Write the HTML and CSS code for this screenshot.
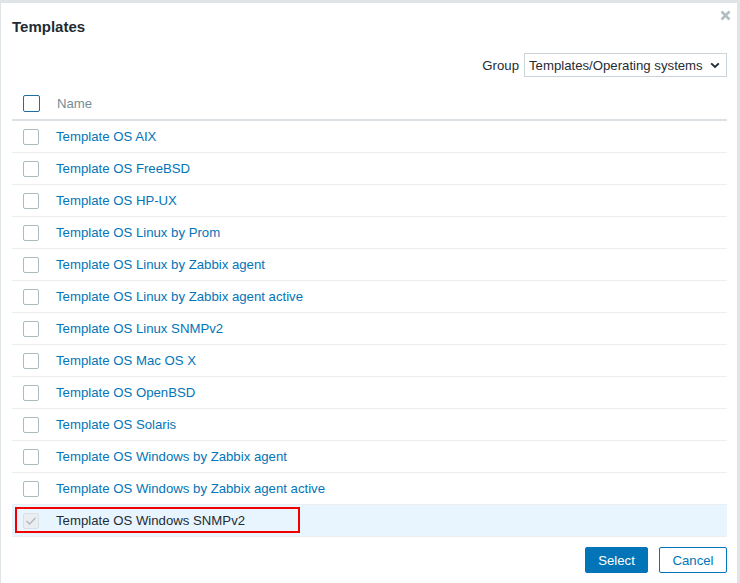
FILE: index.html
```html
<!DOCTYPE html>
<html>
<head>
<meta charset="utf-8">
<link rel="stylesheet" href="styles.css">
</head>
<body>
<div class="dialog">
  <div class="dialog-head">
    <h1 class="title">Templates</h1>
    <span class="close">
      <svg width="11" height="11" viewBox="0 0 11 11"><path d="M1.5 1.5 L9.5 9.5 M9.5 1.5 L1.5 9.5" stroke="#b3bec4" stroke-width="2.6" stroke-linecap="butt"/></svg>
    </span>
  </div>
  <div class="filter">
    <span class="filter-label">Group</span>
    <div class="select">
      <span>Templates/Operating systems</span>
      <svg class="chev" width="10" height="7" viewBox="0 0 10 7"><path d="M1.2 1.4 L5 5 L8.8 1.4" fill="none" stroke="#1f2c33" stroke-width="1.9"/></svg>
    </div>
  </div>
  <div class="table">
    <div class="row head">
      <span class="cb cb-focus"></span>
      <span class="name-h">Name</span>
    </div>
    <div class="row"><span class="cb"></span><a class="link">Template OS AIX</a></div>
    <div class="row"><span class="cb"></span><a class="link">Template OS FreeBSD</a></div>
    <div class="row"><span class="cb"></span><a class="link">Template OS HP-UX</a></div>
    <div class="row"><span class="cb"></span><a class="link">Template OS Linux by Prom</a></div>
    <div class="row"><span class="cb"></span><a class="link">Template OS Linux by Zabbix agent</a></div>
    <div class="row"><span class="cb"></span><a class="link">Template OS Linux by Zabbix agent active</a></div>
    <div class="row"><span class="cb"></span><a class="link">Template OS Linux SNMPv2</a></div>
    <div class="row"><span class="cb"></span><a class="link">Template OS Mac OS X</a></div>
    <div class="row"><span class="cb"></span><a class="link">Template OS OpenBSD</a></div>
    <div class="row"><span class="cb"></span><a class="link">Template OS Solaris</a></div>
    <div class="row"><span class="cb"></span><a class="link">Template OS Windows by Zabbix agent</a></div>
    <div class="row"><span class="cb"></span><a class="link">Template OS Windows by Zabbix agent active</a></div>
    <div class="row selected">
      <span class="cb cb-disabled">
        <svg width="12" height="10" viewBox="0 0 12 10"><path d="M1.5 5 L4.6 8 L10.5 1.8" fill="none" stroke="#b4bfc5" stroke-width="1.6"/></svg>
      </span>
      <span class="plain">Template OS Windows SNMPv2</span>
      <span class="highlight"></span>
    </div>
  </div>
  <div class="footer">
    <button class="btn primary">Select</button>
    <button class="btn secondary">Cancel</button>
  </div>
</div>
</body>
</html>
```
FILE: styles.css
```css
html, body {
  margin: 0;
  padding: 0;
}
body {
  background: #dfe4e7;
  width: 740px;
  height: 583px;
  overflow: hidden;
  font-family: "Liberation Sans", Arial, sans-serif;
  font-size: 13.2px;
  color: #1f2c33;
}
.dialog {
  margin: 3px 3px 0 1px;
  height: 580px;
  background: #ffffff;
  padding: 0 10px 0 11px;
  box-sizing: border-box;
  position: relative;
}
.dialog-head {
  padding-top: 15px;
  height: 21px;
}
.title {
  margin: 0;
  font-size: 15px;
  font-weight: bold;
  line-height: 18px;
  color: #1f2c33;
  padding-left: 0;
}
.close {
  position: absolute;
  right: 6px;
  top: 7px;
  line-height: 0;
}
.filter {
  display: flex;
  justify-content: flex-end;
  align-items: center;
  margin-top: 14px;
  gap: 5px;
}
.filter-label {
  font-size: 13.2px;
}
.select {
  width: 203px;
  height: 24px;
  border: 1px solid #c9d3d8;
  display: flex;
  align-items: center;
  justify-content: space-between;
  padding: 0 6px 0 4px;
  box-sizing: border-box;
  font-size: 13.2px;
}
.select span {
  white-space: nowrap;
}
.chev {
  display: block;
}
.table {
  margin-top: 10px;
}
.row {
  display: flex;
  align-items: center;
  height: 31px;
  border-bottom: 1px solid #ebeef0;
  padding-left: 11px;
  position: relative;
}
.row.head {
  height: 32px;
  border-bottom: 2px solid #dbe1e5;
}
.cb {
  width: 14px;
  height: 14px;
  border: 1px solid #acbbc2;
  border-radius: 2px;
  background: #fff;
  flex: none;
  margin-right: 17px;
  display: flex;
  align-items: center;
  justify-content: center;
}
.cb-focus {
  border-color: #1f6ea3;
  width: 15px;
  height: 15px;
}
.cb-disabled {
  background: #ebeef0;
  border-color: #d9e0e4;
}
.name-h {
  color: #768d99;
}
.link {
  color: #0275b8;
}
.plain {
  color: #1f2c33;
}
.selected {
  background: #e8f5ff;
}
.highlight {
  position: absolute;
  left: 3px;
  top: 2px;
  width: 281px;
  height: 22px;
  border: 2px solid #f20000;
}
.footer {
  display: flex;
  justify-content: flex-end;
  gap: 11px;
  margin-top: 10px;
}
.btn {
  height: 26px;
  font-family: "Liberation Sans", Arial, sans-serif;
  font-size: 13.2px;
  border-radius: 2px;
  padding: 0 12px;
  cursor: pointer;
}
.primary {
  background: #0275b8;
  border: 1px solid #0275b8;
  color: #fff;
  width: 63px;
}
.secondary {
  background: #fff;
  border: 1px solid #0275b8;
  color: #0275b8;
  width: 68px;
}
```
